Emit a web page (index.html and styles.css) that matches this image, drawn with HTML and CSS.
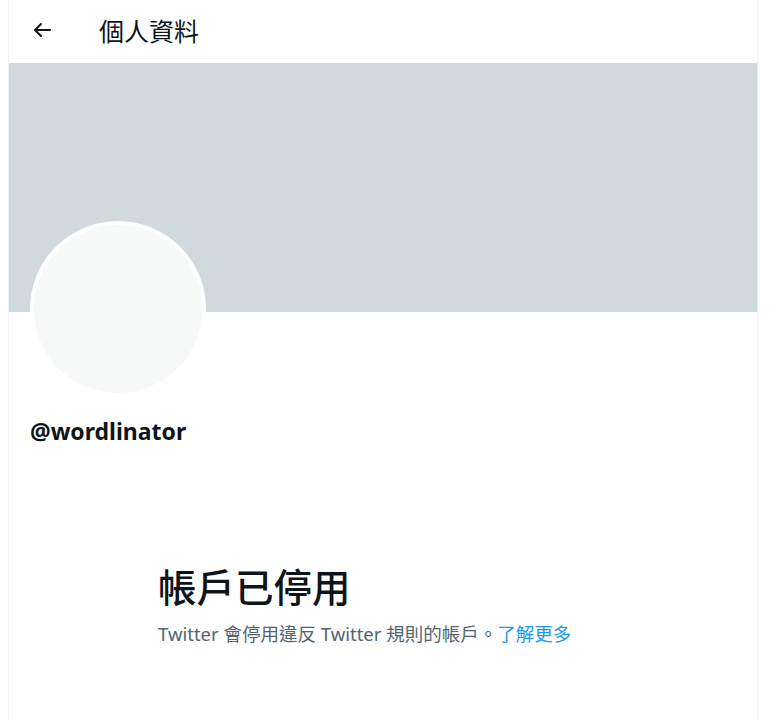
FILE: index.html
```html
<!DOCTYPE html>
<html lang="zh-Hant">
<head>
<meta charset="utf-8">
<title>個人資料</title>
<link rel="stylesheet" href="styles.css">
</head>
<body>
<main class="col">
  <header class="topbar">
    <button class="back" aria-label="返回">
      <svg viewBox="0 0 24 24" class="back-icon"><path d="M20 11H7.414l4.293-4.293c.39-.39.39-1.023 0-1.414s-1.023-.39-1.414 0l-6 6c-.39.39-.39 1.023 0 1.414l6 6c.195.195.45.293.707.293s.512-.098.707-.293c.39-.39.39-1.023 0-1.414L7.414 13H20c.553 0 1-.447 1-1s-.447-1-1-1z"/></svg>
    </button>
    <h2 class="title">個人資料</h2>
  </header>
  <div class="banner"></div>
  <section class="profile">
    <div class="avatar"></div>
    <div class="handle">@wordlinator</div>
  </section>
  <section class="empty">
    <h1 class="empty-title">帳戶已停用</h1>
    <p class="empty-text">Twitter 會停用違反 Twitter 規則的帳戶。<a href="#" class="link">了解更多</a></p>
  </section>
</main>
</body>
</html>
```

FILE: styles.css
```css
html, body {
  margin: 0;
  padding: 0;
  background: #ffffff;
}
body {
  font-family: "Noto Sans", "Noto Sans CJK TC", sans-serif;
  color: #0f1419;
}
.col {
  box-sizing: border-box;
  margin-left: 8px;
  width: 750px;
  min-height: 720px;
  border-left: 1px solid #eff3f4;
  border-right: 1px solid #eff3f4;
}
.topbar {
  height: 63px;
  display: flex;
  align-items: center;
  padding-left: 13px;
  padding-bottom: 4px;
  box-sizing: border-box;
}
.back {
  width: 40px;
  height: 40px;
  padding: 0;
  border: 0;
  background: transparent;
  display: flex;
  align-items: center;
  justify-content: center;
  margin-right: 37px;
}
.back-icon {
  width: 24px;
  height: 24px;
  fill: #0f1419;
}
.title {
  margin: 0;
  font-family: "Noto Sans CJK TC", sans-serif;
  font-size: 25px;
  font-weight: 400;
  line-height: 28px;
  color: #0f1419;
}
.banner {
  height: 249px;
  background: #cfd9de;
}
.profile {
  padding: 0 21px;
}
.avatar {
  box-sizing: border-box;
  width: 176px;
  height: 176px;
  margin-top: -91px;
  border-radius: 50%;
  border: 4px solid #ffffff;
  background: #f7f9f9;
}
.handle {
  margin-top: 19px;
  font-size: 23px;
  font-weight: 700;
  line-height: 30px;
  color: #0f1419;
}
.empty {
  max-width: 450px;
  margin: 116px auto 0;
}
.empty-title {
  margin: 0;
  font-family: "Noto Sans CJK TC", sans-serif;
  font-size: 38.5px;
  font-weight: 500;
  line-height: 46px;
  color: #0f1419;
}
.empty-text {
  margin: 14px 0 0;
  font-size: 18.5px;
  line-height: 24px;
  color: #536471;
}
.link {
  color: #1d9bf0;
  text-decoration: none;
}
```
